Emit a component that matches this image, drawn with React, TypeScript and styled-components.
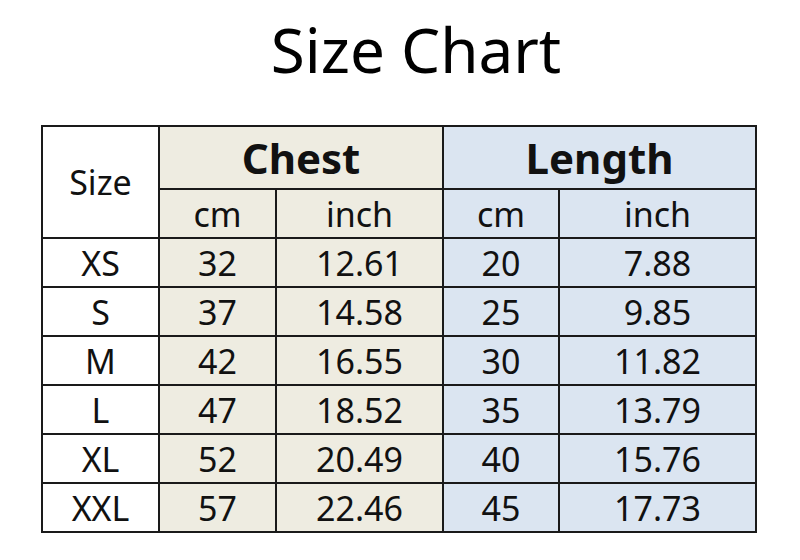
import styled, { createGlobalStyle } from "styled-components";

const GlobalStyle = createGlobalStyle`
  html, body {
    margin: 0;
    padding: 0;
    background: #ffffff;
  }
  body {
    font-family: "Noto Sans", "Open Sans", sans-serif;
    color: #111111;
  }
`;

const Page = styled.div`
  width: 800px;
  height: 560px;
  display: flex;
  flex-direction: column;
  align-items: flex-start;
  overflow: hidden;
`;

const Title = styled.h1`
  align-self: stretch;
  margin: 9px 0 0 0;
  padding-left: 32px;
  text-align: center;
  font-size: 62px;
  line-height: 80px;
  font-weight: 400;
  color: #000;
`;

const Table = styled.table`
  margin: 36px 0 0 41px;
  border-collapse: collapse;
  table-layout: fixed;
`;

const Col = styled.col<{ $w: number }>`
  width: ${(p) => p.$w}px;
`;

type Tone = "plain" | "chest" | "length";

const toneBg: Record<Tone, string> = {
  plain: "#ffffff",
  chest: "#eeece1",
  length: "#dbe5f1",
};

const Cell = styled.td<{ $tone: Tone }>`
  border: 2px solid #1a1a1a;
  background: ${(p) => toneBg[p.$tone]};
  text-align: center;
  vertical-align: middle;
  padding: 0;
  height: 47px;
  font-size: 34px;
  line-height: 1;
  font-weight: 400;
  color: #111;
`;

const HeadCell = styled(Cell).attrs({ as: "th" })``;

const GroupCell = styled(Cell).attrs({ as: "th" })`
  height: 61px;
  font-size: 42px;
  font-weight: 700;
`;

const widths = [117, 117, 167, 116, 197];

const rows = [
  ["XS", "32", "12.61", "20", "7.88"],
  ["S", "37", "14.58", "25", "9.85"],
  ["M", "42", "16.55", "30", "11.82"],
  ["L", "47", "18.52", "35", "13.79"],
  ["XL", "52", "20.49", "40", "15.76"],
  ["XXL", "57", "22.46", "45", "17.73"],
];

const tones: Tone[] = ["plain", "chest", "chest", "length", "length"];

export default function App() {
  return (
    <Page>
      <GlobalStyle />
      <Title>Size Chart</Title>
      <Table>
        <colgroup>
          {widths.map((w, i) => (
            <Col key={i} $w={w} />
          ))}
        </colgroup>
        <thead>
          <tr>
            <HeadCell $tone="plain" rowSpan={2}>
              Size
            </HeadCell>
            <GroupCell $tone="chest" colSpan={2}>
              Chest
            </GroupCell>
            <GroupCell $tone="length" colSpan={2}>
              Length
            </GroupCell>
          </tr>
          <tr>
            <HeadCell $tone="chest">cm</HeadCell>
            <HeadCell $tone="chest">inch</HeadCell>
            <HeadCell $tone="length">cm</HeadCell>
            <HeadCell $tone="length">inch</HeadCell>
          </tr>
        </thead>
        <tbody>
          {rows.map((r) => (
            <tr key={r[0]}>
              {r.map((v, i) => (
                <Cell key={i} $tone={tones[i]}>
                  {v}
                </Cell>
              ))}
            </tr>
          ))}
        </tbody>
      </Table>
    </Page>
  );
}
